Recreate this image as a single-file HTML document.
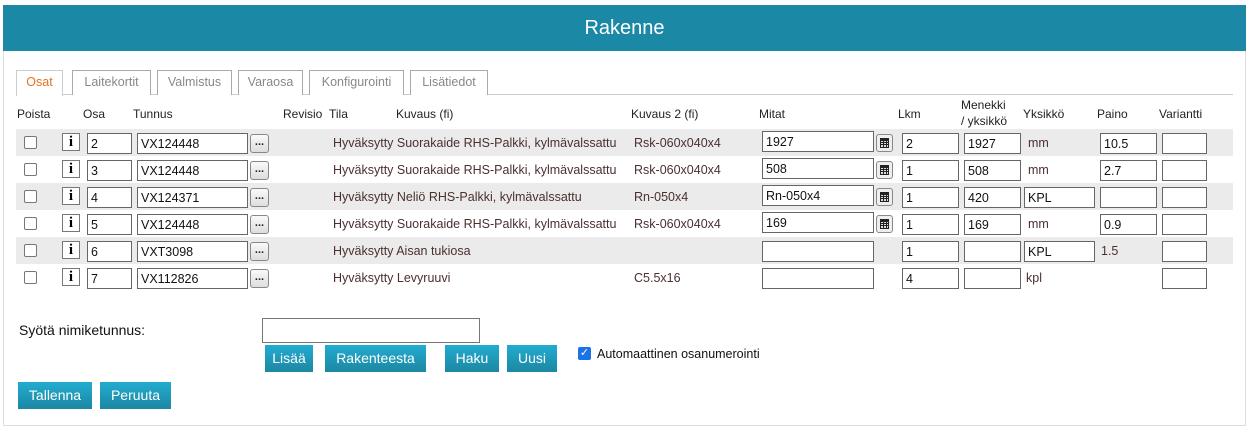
<!DOCTYPE html>
<html><head><meta charset="utf-8"><style>
*{box-sizing:border-box;margin:0;padding:0}
body{width:1250px;height:429px;background:#fff;font-family:"Liberation Sans",sans-serif;font-size:12px;color:#222;position:relative;overflow:hidden}
.a{position:absolute}
.panel{left:3px;top:5px;width:1243px;height:421px;border:1px solid #ddd}
.hdr{left:3px;top:5px;width:1243px;height:46px;background:#1b89a6;color:#fff;font-size:20px;text-align:center;line-height:46px}
.tab{top:70px;height:25px;border:1px solid #aaa;border-bottom:none;color:#888;font-size:12.5px;text-align:center;line-height:22px;background:#fff}
.tab.on{border-color:#ccc;color:#e8731f;height:26px}
.tline{left:16px;top:94px;width:1217px;border-top:1px solid #ccc}
.h{top:107px;font-size:12px}
.row{left:16px;width:1217px;height:27px}
.g{background:#ebebeb}
.cb{top:7px;left:8px;width:13px;height:13px;border:1px solid #777;border-radius:2px;background:#fff}
.ib{top:4px;left:46px;width:18px;height:18px;border:1px solid #777;background:#fff;font-family:"Liberation Serif",serif;font-weight:bold;font-size:15px;text-align:center;line-height:16px;color:#000}
.in{height:21px;border:1px solid #666;background:#fff;font-size:12.5px;line-height:19px;padding:1px 0 0 3px;color:#111}
.dot{top:5px;left:234px;width:19px;height:19px;border:1px solid #888;border-radius:3px;background:linear-gradient(#fafafa,#ddd);font-size:11px;text-align:center;line-height:14px;font-weight:bold}
.calc{left:860px;top:5px;width:17px;height:18px;border:1px solid #888;border-radius:3px;background:#eee}
.calc i{position:absolute;left:3px;top:3px;width:9px;height:10px;background:#222}
.calc i:before{content:"";position:absolute;left:1px;top:3px;width:7px;height:6px;background:
linear-gradient(90deg,transparent 2px,#222 2px 3px,transparent 3px 5px,#222 5px 6px,transparent 6px),
linear-gradient(transparent 1px,#222 1px 2px,transparent 2px 3px,#222 3px 4px,transparent 4px),#ddd}
.t{top:7px;color:#4b3030;font-size:12.5px}
.btn{background:linear-gradient(#22acd0,#1c87a3);color:#fff;font-size:14px;text-align:center;line-height:27px;height:27px}
</style></head><body>
<div class="a panel"></div>
<div class="a hdr">Rakenne</div>
<div class="a tline"></div>
<div class="a tab on" style="left:16px;width:47px">Osat</div>
<div class="a tab" style="left:72px;width:79px">Laitekortit</div>
<div class="a tab" style="left:157px;width:75px">Valmistus</div>
<div class="a tab" style="left:238px;width:65px">Varaosa</div>
<div class="a tab" style="left:309px;width:95px">Konfigurointi</div>
<div class="a tab" style="left:410px;width:78px">Lisätiedot</div>

<div class="a h" style="left:17px">Poista</div>
<div class="a h" style="left:83px">Osa</div>
<div class="a h" style="left:133px">Tunnus</div>
<div class="a h" style="left:283px">Revisio</div>
<div class="a h" style="left:329px">Tila</div>
<div class="a h" style="left:396px">Kuvaus (fi)</div>
<div class="a h" style="left:631px">Kuvaus 2 (fi)</div>
<div class="a h" style="left:759px">Mitat</div>
<div class="a h" style="left:898px">Lkm</div>
<div class="a" style="left:961px;top:97px;line-height:16px">Menekki<br>/ yksikkö</div>
<div class="a h" style="left:1023px">Yksikkö</div>
<div class="a h" style="left:1097px">Paino</div>
<div class="a h" style="left:1159px">Variantti</div>

<div class="a row g" style="top:129px">
<div class="a cb"></div><div class="a ib">i</div>
<div class="a in" style="left:71px;top:4px;width:45px">2</div>
<div class="a in" style="left:121px;top:4px;width:111px">VX124448</div><div class="a dot">...</div>
<div class="a t" style="left:317px">Hyväksytty Suorakaide RHS-Palkki, kylmävalssattu</div>
<div class="a t" style="left:618px">Rsk-060x040x4</div>
<div class="a in" style="left:746px;top:2px;width:112px">1927</div><div class="a calc"><i></i></div>
<div class="a in" style="left:886px;top:4px;width:57px">2</div>
<div class="a in" style="left:948px;top:4px;width:57px">1927</div>
<div class="a t" style="left:1012px">mm</div>
<div class="a in" style="left:1084px;top:4px;width:57px">10.5</div>
<div class="a in" style="left:1146px;top:4px;width:45px"></div>
</div>
<div class="a row" style="top:156px">
<div class="a cb"></div><div class="a ib">i</div>
<div class="a in" style="left:71px;top:4px;width:45px">3</div>
<div class="a in" style="left:121px;top:4px;width:111px">VX124448</div><div class="a dot">...</div>
<div class="a t" style="left:317px">Hyväksytty Suorakaide RHS-Palkki, kylmävalssattu</div>
<div class="a t" style="left:618px">Rsk-060x040x4</div>
<div class="a in" style="left:746px;top:2px;width:112px">508</div><div class="a calc"><i></i></div>
<div class="a in" style="left:886px;top:4px;width:57px">1</div>
<div class="a in" style="left:948px;top:4px;width:57px">508</div>
<div class="a t" style="left:1012px">mm</div>
<div class="a in" style="left:1084px;top:4px;width:57px">2.7</div>
<div class="a in" style="left:1146px;top:4px;width:45px"></div>
</div>
<div class="a row g" style="top:183px">
<div class="a cb"></div><div class="a ib">i</div>
<div class="a in" style="left:71px;top:4px;width:45px">4</div>
<div class="a in" style="left:121px;top:4px;width:111px">VX124371</div><div class="a dot">...</div>
<div class="a t" style="left:317px">Hyväksytty Neliö RHS-Palkki, kylmävalssattu</div>
<div class="a t" style="left:618px">Rn-050x4</div>
<div class="a in" style="left:746px;top:2px;width:112px">Rn-050x4</div><div class="a calc"><i></i></div>
<div class="a in" style="left:886px;top:4px;width:57px">1</div>
<div class="a in" style="left:948px;top:4px;width:57px">420</div>
<div class="a in" style="left:1008px;top:4px;width:71px">KPL</div>
<div class="a in" style="left:1084px;top:4px;width:57px"></div>
<div class="a in" style="left:1146px;top:4px;width:45px"></div>
</div>
<div class="a row" style="top:210px">
<div class="a cb"></div><div class="a ib">i</div>
<div class="a in" style="left:71px;top:4px;width:45px">5</div>
<div class="a in" style="left:121px;top:4px;width:111px">VX124448</div><div class="a dot">...</div>
<div class="a t" style="left:317px">Hyväksytty Suorakaide RHS-Palkki, kylmävalssattu</div>
<div class="a t" style="left:618px">Rsk-060x040x4</div>
<div class="a in" style="left:746px;top:2px;width:112px">169</div><div class="a calc"><i></i></div>
<div class="a in" style="left:886px;top:4px;width:57px">1</div>
<div class="a in" style="left:948px;top:4px;width:57px">169</div>
<div class="a t" style="left:1012px">mm</div>
<div class="a in" style="left:1084px;top:4px;width:57px">0.9</div>
<div class="a in" style="left:1146px;top:4px;width:45px"></div>
</div>
<div class="a row g" style="top:237px">
<div class="a cb"></div><div class="a ib">i</div>
<div class="a in" style="left:71px;top:4px;width:45px">6</div>
<div class="a in" style="left:121px;top:4px;width:111px">VXT3098</div><div class="a dot">...</div>
<div class="a t" style="left:317px">Hyväksytty Aisan tukiosa</div>
<div class="a in" style="left:746px;top:4px;width:112px"></div>
<div class="a in" style="left:886px;top:4px;width:57px">1</div>
<div class="a in" style="left:948px;top:4px;width:57px"></div>
<div class="a in" style="left:1008px;top:4px;width:71px">KPL</div>
<div class="a t" style="left:1085px">1.5</div>
<div class="a in" style="left:1146px;top:4px;width:45px"></div>
</div>
<div class="a row" style="top:264px">
<div class="a cb"></div><div class="a ib">i</div>
<div class="a in" style="left:71px;top:4px;width:45px">7</div>
<div class="a in" style="left:121px;top:4px;width:111px">VX112826</div><div class="a dot">...</div>
<div class="a t" style="left:317px">Hyväksytty Levyruuvi</div>
<div class="a t" style="left:618px">C5.5x16</div>
<div class="a in" style="left:746px;top:4px;width:112px"></div>
<div class="a in" style="left:886px;top:4px;width:57px">4</div>
<div class="a in" style="left:948px;top:4px;width:57px"></div>
<div class="a t" style="left:1010px">kpl</div>
<div class="a in" style="left:1146px;top:4px;width:45px"></div>
</div>

<div class="a" style="left:19px;top:322px;font-size:14px;color:#111">Syötä nimiketunnus:</div>
<div class="a" style="left:262px;top:318px;width:218px;height:25px;border:1px solid #777;background:#fff"></div>
<div class="a btn" style="left:265px;top:345px;width:48px">Lisää</div>
<div class="a btn" style="left:325px;top:345px;width:101px">Rakenteesta</div>
<div class="a btn" style="left:445px;top:345px;width:54px">Haku</div>
<div class="a btn" style="left:507px;top:345px;width:50px">Uusi</div>
<div class="a" style="left:578px;top:347px;width:13px;height:13px;background:#1a73e8;border-radius:2px;color:#fff;font-size:11px;line-height:13px;text-align:center">✓</div>
<div class="a" style="left:597px;top:347px;font-size:12.5px;color:#111">Automaattinen osanumerointi</div>
<div class="a btn" style="left:18px;top:382px;width:74px">Tallenna</div>
<div class="a btn" style="left:100px;top:382px;width:71px">Peruuta</div>
</body></html>
